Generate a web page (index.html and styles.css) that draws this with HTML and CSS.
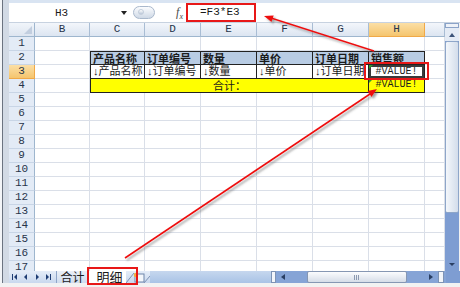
FILE: index.html
```html
<!DOCTYPE html>
<html lang="zh-CN">
<head>
    <meta charset="UTF-8">
    <title>明细 - 销售额</title>
    <link rel="stylesheet" href="styles.css">
</head>
<body>
<div class="app">
    <div class="topstrip"></div>

    <!-- 名称框 + 编辑栏 -->
    <div class="formula-bar">
        <div class="namebox"><span>H3</span><i class="drop"></i></div>
        <div class="pill"><i></i></div>
        <div class="fx">f<sub>x</sub></div>
        <div class="formula">=F3*E3</div>
    </div>

    <div class="main">
        <div class="sheet">
            <div class="corner"></div>
            <div class="ch">B</div><div class="ch">C</div><div class="ch">D</div><div class="ch">E</div>
            <div class="ch">F</div><div class="ch">G</div><div class="ch on">H</div><div class="ch"></div>

            <div class="rh">1</div>
            <div class="c"></div><div class="c"></div><div class="c"></div><div class="c"></div>
            <div class="c"></div><div class="c"></div><div class="c"></div><div class="c"></div>

            <div class="rh">2</div>
            <div class="c"></div>
            <div class="c th first">产品名称</div>
            <div class="c th">订单编号</div>
            <div class="c th">数量</div>
            <div class="c th">单价</div>
            <div class="c th">订单日期</div>
            <div class="c th">销售额</div>
            <div class="c"></div>

            <div class="rh on">3</div>
            <div class="c"></div>
            <div class="c td first">↓产品名称</div>
            <div class="c td">↓订单编号</div>
            <div class="c td">↓数量</div>
            <div class="c td">↓单价</div>
            <div class="c td">↓订单日期</div>
            <div class="c td val err sel">#VALUE!</div>
            <div class="c"></div>

            <div class="rh">4</div>
            <div class="c"></div>
            <div class="c total first span5">合计：</div>
            <div class="c total val err">#VALUE!</div>
            <div class="c"></div>

            <div class="rh">5</div>
            <div class="c"></div><div class="c"></div><div class="c"></div><div class="c"></div>
            <div class="c"></div><div class="c"></div><div class="c"></div><div class="c"></div>
            <div class="rh">6</div>
            <div class="c"></div><div class="c"></div><div class="c"></div><div class="c"></div>
            <div class="c"></div><div class="c"></div><div class="c"></div><div class="c"></div>
            <div class="rh">7</div>
            <div class="c"></div><div class="c"></div><div class="c"></div><div class="c"></div>
            <div class="c"></div><div class="c"></div><div class="c"></div><div class="c"></div>
            <div class="rh">8</div>
            <div class="c"></div><div class="c"></div><div class="c"></div><div class="c"></div>
            <div class="c"></div><div class="c"></div><div class="c"></div><div class="c"></div>
            <div class="rh">9</div>
            <div class="c"></div><div class="c"></div><div class="c"></div><div class="c"></div>
            <div class="c"></div><div class="c"></div><div class="c"></div><div class="c"></div>
            <div class="rh">10</div>
            <div class="c"></div><div class="c"></div><div class="c"></div><div class="c"></div>
            <div class="c"></div><div class="c"></div><div class="c"></div><div class="c"></div>
            <div class="rh">11</div>
            <div class="c"></div><div class="c"></div><div class="c"></div><div class="c"></div>
            <div class="c"></div><div class="c"></div><div class="c"></div><div class="c"></div>
            <div class="rh">12</div>
            <div class="c"></div><div class="c"></div><div class="c"></div><div class="c"></div>
            <div class="c"></div><div class="c"></div><div class="c"></div><div class="c"></div>
            <div class="rh">13</div>
            <div class="c"></div><div class="c"></div><div class="c"></div><div class="c"></div>
            <div class="c"></div><div class="c"></div><div class="c"></div><div class="c"></div>
            <div class="rh">14</div>
            <div class="c"></div><div class="c"></div><div class="c"></div><div class="c"></div>
            <div class="c"></div><div class="c"></div><div class="c"></div><div class="c"></div>
            <div class="rh">15</div>
            <div class="c"></div><div class="c"></div><div class="c"></div><div class="c"></div>
            <div class="c"></div><div class="c"></div><div class="c"></div><div class="c"></div>
            <div class="rh">16</div>
            <div class="c"></div><div class="c"></div><div class="c"></div><div class="c"></div>
            <div class="c"></div><div class="c"></div><div class="c"></div><div class="c"></div>
            <div class="rh last">17</div>
            <div class="c"></div><div class="c"></div><div class="c"></div><div class="c"></div>
            <div class="c"></div><div class="c"></div><div class="c"></div><div class="c"></div>
        </div>

        <div class="vscroll">
            <div class="split-v"></div>
            <div class="vbtn"><i class="tri up"></i></div>
            <div class="vthumb"></div>
            <div class="vtrack"><i class="tri down"></i></div>
        </div>
    </div>

    <!-- 工作表标签 -->
    <div class="tabbar">
        <div class="nav">
            <svg width="47" height="12" viewBox="0 0 47 12">
                <g fill="#1f3d73">
                    <rect x="3" y="3" width="1" height="6"/>
                    <polygon points="8,3 8,9 5,6"/>
                    <polygon points="18,3 18,9 15,6"/>
                    <polygon points="27,3 27,9 30,6"/>
                    <polygon points="37,3 37,9 40,6"/>
                    <rect x="41" y="3" width="1" height="6"/>
                </g>
            </svg>
        </div>
        <div class="tab">合计</div>
        <div class="tab active">明细</div>
        <div class="newsheet">
            <svg width="24" height="12" viewBox="0 0 24 12">
                <path d="M0 12 L8 2" stroke="#7d93b5" fill="none"/>
                <rect x="9" y="3" width="9" height="8" fill="#f4f7fb" stroke="#6f86aa"/>
                <circle cx="10" cy="4" r="2.2" fill="#f3b13c"/>
                <path d="M18 12 L24 5" stroke="#7d93b5" fill="none"/>
            </svg>
        </div>
        <div class="spacer"></div>
        <div class="hscroll">
            <div class="split-h"></div>
            <div class="hbtn"><i class="tri left"></i></div>
            <div class="htrack"></div>
            <div class="hthumb"><span class="grip"></span></div>
            <div class="htrack grow"></div>
            <div class="hbtn"><i class="tri right"></i></div>
            <div class="split-h"></div>
        </div>
        <div class="sizer"></div>
    </div>
    <div class="status"></div>

    <!-- 标注 -->
    <div class="mark mark-formula"></div>
    <div class="mark mark-cell"></div>
    <div class="mark mark-tab"></div>
    <svg class="arrows" width="460" height="287" viewBox="0 0 460 287">
        <defs>
            <filter id="shadow" x="-10%" y="-10%" width="120%" height="120%">
                <feDropShadow dx="2" dy="2" stdDeviation="1.2" flood-color="#555" flood-opacity="0.55"/>
            </filter>
        </defs>
        <g filter="url(#shadow)" stroke="#ee1111" stroke-width="1.6" fill="#ee1111">
            <line x1="374" y1="51" x2="271" y2="18"/>
            <polygon points="264,16 273.7,15.4 271.5,22" stroke="none"/>
            <line x1="125" y1="258" x2="370" y2="94"/>
            <polygon points="377,89 371.5,96.9 367.6,91.1" stroke="none"/>
        </g>
    </svg>
</div>
</body>
</html>
```

FILE: styles.css
```css
body {
    margin: 0;
    width: 460px;
    height: 287px;
    overflow: hidden;
    background: #f2f2f2;
    font-family: "Liberation Mono", "DejaVu Sans Mono", "Noto Sans CJK SC", monospace;
    font-size: 11px;
    color: #1b1b1b;
}
.app {
    position: relative;
    height: 287px;
    padding-left: 9px;
    background: linear-gradient(to right, #f3f5f8 0 2px, #6b7380 2px 3px, #d2dae5 3px 9px, transparent 9px);
}
.topstrip { height: 3px; background: #d9e4f2; }

/* 编辑栏 */
.formula-bar {
    display: flex;
    height: 19px;
    background: #fff;
    border-bottom: 1px solid #c7d2e0;
}
.namebox {
    width: 122px;
    display: flex;
    align-items: center;
    justify-content: space-between;
    padding: 0 4px 0 46px;
    box-sizing: border-box;
}
.drop {
    width: 0; height: 0;
    border-left: 3px solid transparent;
    border-right: 3px solid transparent;
    border-top: 4px solid #222;
}
.pill {
    width: 22px;
    height: 13px;
    margin: 3px 0 0 2px;
    border: 1px solid #a9b8cc;
    border-radius: 8px;
    box-sizing: border-box;
    background: linear-gradient(#fbfcfe, #cfd9e6);
    position: relative;
}
.pill i {
    position: absolute;
    left: 4px; top: 2px;
    width: 6px; height: 6px;
    border-radius: 50%;
    background: linear-gradient(#fff, #b9c6d8);
    border: 1px solid #c2cddb;
    box-sizing: border-box;
}
.fx {
    width: 31px;
    text-align: right;
    padding-right: 3px;
    box-sizing: border-box;
    font-family: "Liberation Serif", serif;
    font-style: italic;
    font-size: 12px;
    line-height: 18px;
    color: #4a4a4a;
}
.fx sub { font-size: 8px; }
.formula {
    flex: 1;
    padding-left: 13px;
    line-height: 19px;
    border-left: 1px solid #b7c3d3;
}

/* 工作表 */
.main { display: flex; height: 248px; }
.sheet {
    width: 436px;
    display: grid;
    grid-template-columns: 26px 55px 55px 56px 56px 56px 56px 56px 20px;
    grid-auto-rows: 14px;
    overflow: hidden;
    background: #fff;
}
.sheet > div {
    box-sizing: border-box;
    white-space: nowrap;
    overflow: hidden;
    line-height: 13px;
}
.c { border-right: 1px solid #dadfe8; border-bottom: 1px solid #dadfe8; }
.corner {
    background: linear-gradient(#f1f5fa, #dde5f0);
    border-right: 1px solid #9eb6ce;
    border-bottom: 1px solid #9eb6ce;
    position: relative;
}
.corner::after {
    content: "";
    position: absolute;
    right: 2px; bottom: 2px;
    border-left: 8px solid transparent;
    border-bottom: 8px solid #c2cedf;
}
.ch {
    background: linear-gradient(#f3f6fb, #dce5f1);
    border-right: 1px solid #a9bdd4;
    border-bottom: 1px solid #9eb6ce;
    text-align: center;
    color: #27344a;
}
.rh {
    background: #e3ebf6;
    border-right: 1px solid #9eb6ce;
    border-bottom: 1px solid #c8d5e6;
    text-align: center;
    color: #27344a;
}
.sheet > .rh.last { line-height: 12px; }
.ch.on, .rh.on {
    background: linear-gradient(#fbdfa6, #f5c56e);
    border-color: #f0a948;
}
.th {
    background: #b8cce4;
    font-family: "Noto Sans CJK SC", sans-serif;
    font-weight: bold;
    padding-left: 2px;
    border-top: 1px solid #222;
    border-right: 1px solid #222;
    border-bottom: 1px solid #222;
}
.td {
    font-family: "Liberation Sans", "Noto Sans CJK SC", sans-serif;
    padding-left: 2px;
    border-right: 1px solid #222;
    border-bottom: 1px solid #222;
}
.first { border-left: 1px solid #222; }
.sheet > .total {
    background: #ffff00;
    border-right: 1px solid #222;
    border-bottom: 1px solid #222;
    text-align: center;
    font-family: "Noto Sans CJK SC", sans-serif;
    line-height: 12px;
    overflow: visible;
}
.span5 { grid-column: span 5; }
.sheet > .val {
    font-family: "Liberation Mono", monospace;
    font-size: 10px;
    text-align: center;
    padding-left: 0;
}
.err { position: relative; }
.err::before {
    content: "";
    position: absolute;
    left: 0; top: 0;
    border-top: 4px solid #2e9a2e;
    border-right: 4px solid transparent;
}
.sel { box-shadow: inset 0 0 0 2px #3a3a3a; }

/* 垂直滚动条 */
.vscroll {
    width: 14px;
    display: flex;
    flex-direction: column;
    background: #7e9dd2;
}
.split-v { height: 5px; background: #eef2f8; border: 1px solid #8ba3c8; box-sizing: border-box; }
.vbtn { height: 13px; background: #e4ebf5; display: flex; align-items: center; justify-content: center; }
.vthumb {
    height: 172px;
    background: linear-gradient(to right, #f4f7fb, #d3ddeb);
    border: 1px solid #8ea6c9;
    border-radius: 2px;
    box-sizing: border-box;
}
.vtrack {
    flex: 1;
    display: flex;
    align-items: flex-end;
    justify-content: center;
    padding-bottom: 5px;
}
.tri { width: 0; height: 0; display: block; }
.tri.up { border-left: 3px solid transparent; border-right: 3px solid transparent; border-bottom: 4px solid #3d5479; }
.tri.down { border-left: 3px solid transparent; border-right: 3px solid transparent; border-top: 3px solid #2a3f63; }
.tri.left { border-top: 3px solid transparent; border-bottom: 3px solid transparent; border-right: 4px solid #2a3f63; }
.tri.right { border-top: 3px solid transparent; border-bottom: 3px solid transparent; border-left: 4px solid #2a3f63; }

/* 标签栏 */
.tabbar {
    display: flex;
    height: 12px;
    background: linear-gradient(#c6d7ee, #a9c3e6);
}
.nav { width: 47px; background: linear-gradient(#e5edf8, #c9d8ee); }
.nav svg { display: block; }
.tab {
    width: 32px;
    font-family: "Noto Sans CJK SC", sans-serif;
    font-size: 12px;
    line-height: 12px;
    text-align: center;
    background: linear-gradient(#eaf0f8, #cfdcee);
    border-left: 1px solid #8ea5c8;
    box-sizing: border-box;
}
.tab.active {
    width: 38px;
    background: #fff;
    font-size: 13px;
    padding-left: 4px;
}
.newsheet { width: 24px; background: linear-gradient(#e5edf8, #c9d8ee); }
.newsheet svg { display: block; }
.spacer { flex: 1; }
.hscroll { width: 175px; display: flex; background: #86a4d6; }
.split-h { width: 5px; background: #f2f5fa; border: 1px solid #7d93b5; box-sizing: border-box; }
.split-h:last-child { width: 6px; margin-right: 2px; }
.hbtn { width: 14px; display: flex; align-items: center; justify-content: center; }
.htrack { width: 17px; }
.htrack.grow { flex: 1; }
.hthumb {
    width: 100px;
    background: linear-gradient(#fbfcfe, #d6dde8);
    border: 1px solid #8697b3;
    border-radius: 2px;
    box-sizing: border-box;
    display: flex;
    align-items: center;
    justify-content: center;
}
.grip {
    width: 6px;
    height: 5px;
    background: repeating-linear-gradient(to right, #8b99b0 0 1px, transparent 1px 2px);
}
.sizer { width: 14px; background: #7e9dd2; }
.status { height: 4px; background: #f2f2f2; margin-left: -9px; }

/* 标注框与箭头 */
.mark {
    position: absolute;
    border: 2px solid #e81818;
    box-sizing: border-box;
}
.mark-formula { left: 186px; top: 3px; width: 70px; height: 19px; }
.mark-cell { left: 364px; top: 62px; width: 65px; height: 18px; }
.mark-tab { left: 87px; top: 267px; width: 51px; height: 18px; }
.arrows { position: absolute; left: 0; top: 0; pointer-events: none; }
```
